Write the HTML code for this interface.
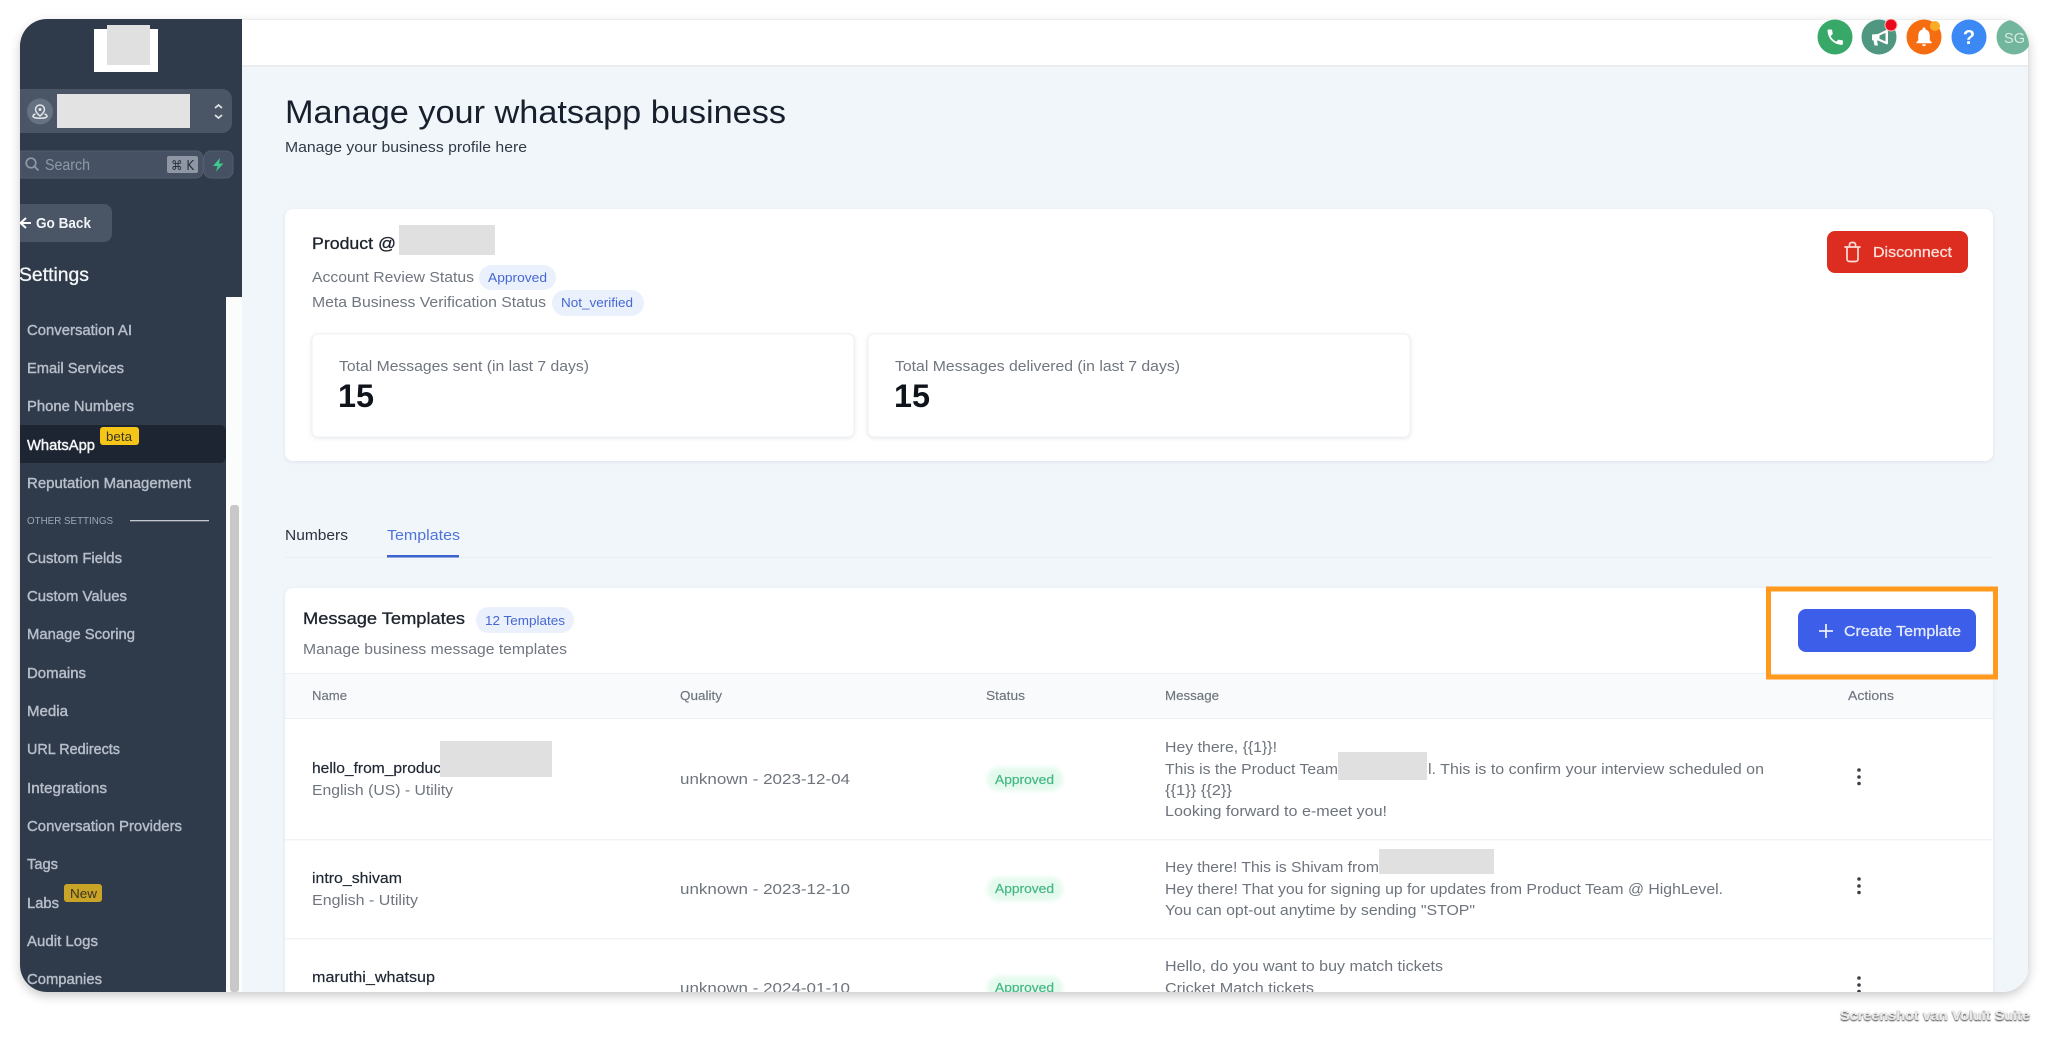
<!DOCTYPE html>
<html lang="en"><head><meta charset="utf-8"><title>Manage your whatsapp business</title>
<style>
html,body{margin:0;padding:0;background:#fff;width:2048px;height:1042px;overflow:hidden}
svg{display:block;filter:blur(.35px)}
text{font-family:"Liberation Sans","DejaVu Sans",sans-serif;fill:currentColor;white-space:pre}
.m{stroke:currentColor;stroke-width:.3px}
.nav{font-size:15px;color:#b7bec9;stroke:currentColor;stroke-width:.42px}
.g{font-size:15px;color:#70767f}
.msg{font-size:15px;color:#6e747d}
.th{font-size:13px;color:#6f757e;stroke:currentColor;stroke-width:.15px}
.bl{font-size:13px;color:#4668d2}
.gn{font-size:13px;color:#45b884;stroke:currentColor;stroke-width:.2px}
.nm{font-size:15px;color:#1f2733;stroke:currentColor;stroke-width:.2px}
</style></head><body>
<svg xmlns="http://www.w3.org/2000/svg" width="2048" height="1042" viewBox="0 0 2048 1042">
<defs>
<clipPath id="win"><rect x="20" y="19" width="2009" height="973" rx="27"/></clipPath>
<filter id="ws" x="-5%" y="-5%" width="110%" height="110%"><feDropShadow dx="0" dy="4" stdDeviation="5" flood-color="#000" flood-opacity=".2"/></filter>
<filter id="cs" x="-5%" y="-10%" width="110%" height="120%"><feDropShadow dx="0" dy="1" stdDeviation="2" flood-color="#8a97a8" flood-opacity=".22"/></filter>
<filter id="soft" x="-30%" y="-60%" width="160%" height="220%"><feGaussianBlur stdDeviation="2"/></filter>
<filter id="wm" x="-5%" y="-40%" width="110%" height="180%"><feDropShadow dx="0" dy="1" stdDeviation=".8" flood-color="#000" flood-opacity=".85"/></filter>
</defs>

<rect x="20" y="19" width="2009" height="973" rx="27" fill="#fff" filter="url(#ws)"/>
<g clip-path="url(#win)">
<rect x="20" y="19" width="2009" height="973" fill="#f1f6fa"/>
<!-- topbar -->
<rect x="242" y="19" width="1787" height="46" fill="#fff"/>
<rect x="242" y="19" width="1787" height="1" fill="#eceef0"/>
<rect x="242" y="65" width="1787" height="2" fill="#eaecee"/>
<rect x="2028" y="19" width="1" height="973" fill="#dfe2e5"/>

<!-- top icons -->
<circle cx="1835" cy="37" r="17.5" fill="#37a868"/>
<path transform="translate(1825 27) scale(.85)" fill="#fff" d="M6.62 10.79c1.44 2.83 3.76 5.14 6.59 6.59l2.2-2.2c.27-.27.67-.36 1.02-.24 1.12.37 2.33.57 3.57.57.55 0 1 .45 1 1V20c0 .55-.45 1-1 1-9.39 0-17-7.61-17-17 0-.55.45-1 1-1h3.5c.55 0 1 .45 1 1 0 1.25.2 2.45.57 3.57.11.35.03.74-.25 1.02l-2.2 2.2z"/>
<circle cx="1879" cy="37" r="17.5" fill="#4f9780"/>
<path fill="#fff" d="M1872 34.5l6-.5 9-4.5 1 1v13l-1 1-9-4-1 .2 1 4.8h-3.4l-1.2-5.2h-1.4zM1879.500 35.500v3.200l6 2.700v-8.500z" fill-rule="evenodd"/>
<circle cx="1891" cy="25" r="6" fill="#ea0a1c" stroke="#ffb9bd" stroke-width="1"/>
<circle cx="1924" cy="37" r="17.5" fill="#f56d10"/>
<path transform="translate(1912.500 25) scale(.96)" fill="#fff" d="M12 22c1.1 0 2-.9 2-2h-4c0 1.100.89 2 2 2zm6-6v-5c0-3.070-1.640-5.640-4.500-6.320V4c0-.83-.67-1.500-1.500-1.500s-1.500.67-1.500 1.500v.68C7.630 5.360 6 7.920 6 11v5l-2 2v1h16v-1l-2-2z"/>
<circle cx="1935" cy="26" r="5" fill="#f8ad24"/>
<circle cx="1969" cy="37" r="17.500" fill="#3c89f6"/>
<text x="1969" y="44" text-anchor="middle" style="font-size:20px;font-weight:700;color:#fff">?</text>
<circle cx="2014" cy="37" r="17.500" fill="#73b69e"/>
<text x="2004" y="43" textLength="21" lengthAdjust="spacingAndGlyphs" style="font-size:15px;color:#d7ebe3">SG</text>

<!-- heading -->
<text x="285" y="123" textLength="501" lengthAdjust="spacingAndGlyphs" style="font-size:32px;color:#17202c">Manage your whatsapp business</text>
<text x="285" y="152" textLength="242" lengthAdjust="spacingAndGlyphs" style="font-size:15px;color:#333b47">Manage your business profile here</text>

<!-- card 1 -->
<rect x="285" y="209" width="1708" height="252" rx="8" fill="#fff" filter="url(#cs)"/>
<text class="m" x="312" y="249" textLength="84" lengthAdjust="spacingAndGlyphs" style="font-size:17px;color:#1d232c">Product @</text>
<rect x="399" y="225" width="96" height="30" fill="#e0e0e0"/>
<text class="g" x="312" y="282" textLength="162" lengthAdjust="spacingAndGlyphs">Account Review Status</text>
<rect x="479" y="265" width="77" height="25" rx="12.500" fill="#eaf0fc"/>
<text class="bl" x="488" y="282" textLength="59" lengthAdjust="spacingAndGlyphs">Approved</text>
<text class="g" x="312" y="307" textLength="234" lengthAdjust="spacingAndGlyphs">Meta Business Verification Status</text>
<rect x="552" y="290" width="92" height="26" rx="13" fill="#eaf0fc"/>
<text class="bl" x="561" y="307" textLength="72" lengthAdjust="spacingAndGlyphs">Not_verified</text>

<rect x="312" y="334" width="542" height="103" rx="6" fill="#fff" stroke="#edf0f3" filter="url(#cs)"/>
<text class="g" x="339" y="371" textLength="250" lengthAdjust="spacingAndGlyphs">Total Messages sent (in last 7 days)</text>
<text x="338" y="407" textLength="36" lengthAdjust="spacingAndGlyphs" style="font-size:32px;font-weight:700;color:#0f141b">15</text>
<rect x="868" y="334" width="542" height="103" rx="6" fill="#fff" stroke="#edf0f3" filter="url(#cs)"/>
<text class="g" x="895" y="371" textLength="285" lengthAdjust="spacingAndGlyphs">Total Messages delivered (in last 7 days)</text>
<text x="894" y="407" textLength="36" lengthAdjust="spacingAndGlyphs" style="font-size:32px;font-weight:700;color:#0f141b">15</text>

<!-- disconnect -->
<rect x="1827" y="231" width="141" height="42" rx="8" fill="#dc2d20"/>
<path fill="none" stroke="#fbdcd6" stroke-width="1.700" stroke-linecap="round" stroke-linejoin="round" d="M1845 247h15M1847 247v12a2.500 2.500 0 0 0 2.500 2.500h6a2.500 2.500 0 0 0 2.500-2.500v-12M1849.500 247v-2.500a2 2 0 0 1 2-2h2a2 2 0 0 1 2 2v2.500"/>
<text class="m" x="1873" y="257" textLength="79" lengthAdjust="spacingAndGlyphs" style="font-size:15px;color:#fbdcd6">Disconnect</text>

<!-- tabs -->
<text x="285" y="540" textLength="63" lengthAdjust="spacingAndGlyphs" style="font-size:15px;color:#2a323d">Numbers</text>
<text x="387" y="540" textLength="73" lengthAdjust="spacingAndGlyphs" style="font-size:15px;color:#4f73d8">Templates</text>
<rect x="285" y="557" width="1708" height="1" fill="#e9eef2"/>
<rect x="387" y="555" width="72" height="2.500" fill="#3d63d0"/>

<!-- card 2 -->
<rect x="285" y="588" width="1708" height="420" rx="8" fill="#fff" filter="url(#cs)"/>
<text class="m" x="303" y="624" textLength="162" lengthAdjust="spacingAndGlyphs" style="font-size:17px;color:#1d232c">Message Templates</text>
<rect x="476" y="607" width="98" height="26" rx="13" fill="#eaf0fc"/>
<text class="bl" x="485" y="625" textLength="80" lengthAdjust="spacingAndGlyphs">12 Templates</text>
<text class="g" x="303" y="654" textLength="264" lengthAdjust="spacingAndGlyphs">Manage business message templates</text>

<rect x="285" y="673" width="1708" height="45" fill="#f8fafc"/>
<rect x="285" y="673" width="1708" height="1" fill="#eff2f5"/>
<rect x="285" y="718" width="1708" height="1" fill="#edf0f3"/>
<text class="th" x="312" y="700" textLength="35" lengthAdjust="spacingAndGlyphs">Name</text>
<text class="th" x="680" y="700" textLength="42" lengthAdjust="spacingAndGlyphs">Quality</text>
<text class="th" x="986" y="700" textLength="39" lengthAdjust="spacingAndGlyphs">Status</text>
<text class="th" x="1165" y="700" textLength="54" lengthAdjust="spacingAndGlyphs">Message</text>
<text class="th" x="1848" y="700" textLength="46" lengthAdjust="spacingAndGlyphs">Actions</text>

<!-- orange highlight & create -->
<rect x="1768.500" y="589" width="227" height="88" fill="#fff" fill-opacity="0" stroke="#ff9a1e" stroke-width="5"/>
<rect x="1798" y="609" width="178" height="43" rx="8" fill="#3c5ee8"/>
<path stroke="#e8eeff" stroke-width="1.800" fill="none" d="M1826 624v14M1819 631h14"/>
<text class="m" x="1844" y="636" textLength="117" lengthAdjust="spacingAndGlyphs" style="font-size:15px;color:#e4eaff">Create Template</text>

<!-- row 1 -->
<text class="nm" x="312" y="773" textLength="129" lengthAdjust="spacingAndGlyphs">hello_from_produc</text>
<rect x="440" y="741" width="112" height="36" fill="#e0e0e0"/>
<text class="g" x="312" y="795" textLength="141" lengthAdjust="spacingAndGlyphs">English (US) - Utility</text>
<text class="msg" x="680" y="784" textLength="170" lengthAdjust="spacingAndGlyphs">unknown - 2023-12-04</text>
<rect x="987" y="767" width="76" height="24" rx="12" fill="#dcf8e8" opacity=".75" filter="url(#soft)"/>
<text class="gn" x="995" y="784" textLength="59" lengthAdjust="spacingAndGlyphs">Approved</text>
<text class="msg" x="1165" y="752" textLength="112" lengthAdjust="spacingAndGlyphs">Hey there, {{1}}!</text>
<text class="msg" x="1165" y="774" textLength="173" lengthAdjust="spacingAndGlyphs">This is the Product Team</text>
<rect x="1338" y="752" width="89" height="28" fill="#e0e0e0"/>
<text class="msg" x="1428" y="774" textLength="336" lengthAdjust="spacingAndGlyphs">l. This is to confirm your interview scheduled on</text>
<text class="msg" x="1165" y="795" textLength="67" lengthAdjust="spacingAndGlyphs">{{1}} {{2}}</text>
<text class="msg" x="1165" y="816" textLength="222" lengthAdjust="spacingAndGlyphs">Looking forward to e-meet you!</text>
<g fill="#3a3f46"><circle cx="1859" cy="770" r="1.800"/><circle cx="1859" cy="777" r="1.800"/><circle cx="1859" cy="783.500" r="1.800"/></g>
<rect x="285" y="839" width="1708" height="1.500" fill="#f1f3f5"/>

<!-- row 2 -->
<text class="nm" x="312" y="883" textLength="90" lengthAdjust="spacingAndGlyphs">intro_shivam</text>
<text class="g" x="312" y="905" textLength="106" lengthAdjust="spacingAndGlyphs">English - Utility</text>
<text class="msg" x="680" y="894" textLength="170" lengthAdjust="spacingAndGlyphs">unknown - 2023-12-10</text>
<rect x="987" y="877" width="76" height="24" rx="12" fill="#dcf8e8" opacity=".75" filter="url(#soft)"/>
<text class="gn" x="995" y="893" textLength="59" lengthAdjust="spacingAndGlyphs">Approved</text>
<text class="msg" x="1165" y="872" textLength="214" lengthAdjust="spacingAndGlyphs">Hey there! This is Shivam from</text>
<rect x="1379" y="849" width="115" height="25" fill="#e0e0e0"/>
<text class="msg" x="1165" y="894" textLength="558" lengthAdjust="spacingAndGlyphs">Hey there! That you for signing up for updates from Product Team @ HighLevel.</text>
<text class="msg" x="1165" y="915" textLength="310" lengthAdjust="spacingAndGlyphs">You can opt-out anytime by sending "STOP"</text>
<g fill="#3a3f46"><circle cx="1859" cy="879" r="1.800"/><circle cx="1859" cy="886" r="1.800"/><circle cx="1859" cy="892.500" r="1.800"/></g>
<rect x="285" y="938" width="1708" height="1.500" fill="#f1f3f5"/>

<!-- row 3 -->
<text class="nm" x="312" y="982" textLength="123" lengthAdjust="spacingAndGlyphs">maruthi_whatsup</text>
<text class="msg" x="680" y="993" textLength="170" lengthAdjust="spacingAndGlyphs">unknown - 2024-01-10</text>
<rect x="987" y="976" width="76" height="24" rx="12" fill="#dcf8e8" opacity=".75" filter="url(#soft)"/>
<text class="gn" x="995" y="992" textLength="59" lengthAdjust="spacingAndGlyphs">Approved</text>
<text class="msg" x="1165" y="971" textLength="278" lengthAdjust="spacingAndGlyphs">Hello, do you want to buy match tickets</text>
<text class="msg" x="1165" y="993" textLength="149" lengthAdjust="spacingAndGlyphs">Cricket Match tickets</text>
<g fill="#3a3f46"><circle cx="1859" cy="978" r="1.800"/><circle cx="1859" cy="985" r="1.800"/><circle cx="1859" cy="991.500" r="1.800"/></g>

<!-- sidebar -->
<rect x="226" y="297" width="16" height="695" fill="#fbfcfc"/>
<rect x="230" y="505" width="9" height="487" rx="3" fill="#c8c8c8"/>
<path d="M20 19H242V297H226V992H20Z" fill="#2f3a4b"/>

<rect x="94" y="29" width="64" height="43" fill="#fff"/>
<rect x="107" y="25" width="43" height="40" fill="#e0e0e0"/>

<path d="M20 89H222a10 10 0 0 1 10 10V123a10 10 0 0 1-10 10H20Z" fill="#4a5566"/>
<circle cx="40" cy="111.500" r="13" fill="#667181"/>
<path fill="none" stroke="#e1e5ea" stroke-width="1.500" d="M40 105a4.500 4.500 0 0 1 4.500 4.500c0 3-4.500 6.500-4.500 6.500s-4.500-3.500-4.500-6.500a4.500 4.500 0 0 1 4.500-4.500zM35.500 114c-1.500.5-2.500 1.200-2.500 2.200 0 1.300 3 2 7 2s7-.7 7-2c0-1-1-1.700-2.500-2.200"/>
<circle cx="40" cy="109.500" r="1.500" fill="#e1e5ea"/>
<rect x="57" y="94" width="133" height="34" fill="#e3e3e3"/>
<path fill="none" stroke="#dfe3e8" stroke-width="1.800" d="M215 108l3.500-3 3.500 3M215 115l3.500 3 3.500-3"/>

<path d="M20 151H196a7 7 0 0 1 7 7V171a7 7 0 0 1-7 7H20Z" fill="#465163" stroke="#515c6e"/>
<circle cx="31" cy="163" r="4.800" fill="none" stroke="#8f98a6" stroke-width="1.700"/>
<path stroke="#8f98a6" stroke-width="1.800" d="M34.500 166.500l4 4"/>
<text x="45" y="170" textLength="45" lengthAdjust="spacingAndGlyphs" style="font-size:16px;color:#8f98a6">Search</text>
<rect x="167" y="156" width="31" height="17" rx="2" fill="#8f96a4"/>
<text x="171" y="170" textLength="23" lengthAdjust="spacingAndGlyphs" style="font-size:13px;color:#28303c;font-family:'DejaVu Sans',sans-serif">⌘ K</text>
<rect x="204" y="151" width="29" height="27" rx="7" fill="#465163" stroke="#515c6e"/>
<path fill="#3ecb8c" d="M220 158l-7 8h4.500l-1.500 5.500 7.500-8h-4.500z"/>

<path d="M20 204H104a8 8 0 0 1 8 8V234a8 8 0 0 1-8 8H20Z" fill="#4a5566"/>
<path fill="none" stroke="#fff" stroke-width="2" d="M31 223H21M26 218l-5.500 5 5.500 5"/>
<text x="36" y="228" textLength="55" lengthAdjust="spacingAndGlyphs" style="font-size:15px;font-weight:700;color:#f2f4f7">Go Back</text>
<text class="m" x="19" y="281" textLength="70" lengthAdjust="spacingAndGlyphs" style="font-size:19px;color:#f4f6f8">Settings</text>

<text class="nav" x="27" y="335" textLength="105" lengthAdjust="spacingAndGlyphs">Conversation AI</text>
<text class="nav" x="27" y="373" textLength="97" lengthAdjust="spacingAndGlyphs">Email Services</text>
<text class="nav" x="27" y="411" textLength="107" lengthAdjust="spacingAndGlyphs">Phone Numbers</text>
<path d="M20 425H220a6 6 0 0 1 6 6V457a6 6 0 0 1-6 6H20Z" fill="#1e2532"/>
<text class="nav" x="27" y="450" textLength="68" lengthAdjust="spacingAndGlyphs" style="color:#f6f7f9">WhatsApp</text>
<rect x="100" y="427" width="39" height="18" rx="3" fill="#f5c518"/>
<text x="106" y="441" textLength="26" lengthAdjust="spacingAndGlyphs" style="font-size:13px;color:#3a3520">beta</text>
<text class="nav" x="27" y="488" textLength="164" lengthAdjust="spacingAndGlyphs">Reputation Management</text>
<text x="27" y="524" textLength="86" lengthAdjust="spacingAndGlyphs" style="font-size:10.500px;color:#a0a8b4">OTHER SETTINGS</text>
<rect x="130" y="520" width="79" height="1.300" fill="#c3c8d0"/>
<text class="nav" x="27" y="563" textLength="95" lengthAdjust="spacingAndGlyphs">Custom Fields</text>
<text class="nav" x="27" y="601" textLength="100" lengthAdjust="spacingAndGlyphs">Custom Values</text>
<text class="nav" x="27" y="639" textLength="108" lengthAdjust="spacingAndGlyphs">Manage Scoring</text>
<text class="nav" x="27" y="678" textLength="59" lengthAdjust="spacingAndGlyphs">Domains</text>
<text class="nav" x="27" y="716" textLength="41" lengthAdjust="spacingAndGlyphs">Media</text>
<text class="nav" x="27" y="754" textLength="93" lengthAdjust="spacingAndGlyphs">URL Redirects</text>
<text class="nav" x="27" y="793" textLength="80" lengthAdjust="spacingAndGlyphs">Integrations</text>
<text class="nav" x="27" y="831" textLength="155" lengthAdjust="spacingAndGlyphs">Conversation Providers</text>
<text class="nav" x="27" y="869" textLength="31" lengthAdjust="spacingAndGlyphs">Tags</text>
<text class="nav" x="27" y="908" textLength="32" lengthAdjust="spacingAndGlyphs">Labs</text>
<rect x="64" y="884" width="38" height="18" rx="3" fill="#c9a426"/>
<text x="70" y="898" textLength="27" lengthAdjust="spacingAndGlyphs" style="font-size:13px;color:#3a3520">New</text>
<text class="nav" x="27" y="946" textLength="71" lengthAdjust="spacingAndGlyphs">Audit Logs</text>
<text class="nav" x="27" y="984" textLength="75" lengthAdjust="spacingAndGlyphs">Companies</text>
</g>

<!-- watermark -->
<text x="1840" y="1020" textLength="190" lengthAdjust="spacingAndGlyphs" filter="url(#wm)" style="font-size:14px;font-weight:700;color:#e9e9e9">Screenshot van Voluit Suite</text>
</svg>
</body></html>
